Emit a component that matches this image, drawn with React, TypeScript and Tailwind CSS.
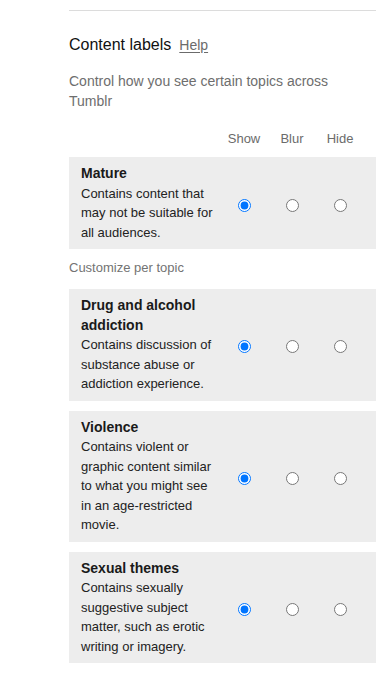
import * as React from "react";

type Topic = {
  id: string;
  title: string;
  description: string;
};

const MATURE: Topic = {
  id: "mature",
  title: "Mature",
  description: "Contains content that may not be suitable for all audiences.",
};

const TOPICS: Topic[] = [
  {
    id: "drugs",
    title: "Drug and alcohol addiction",
    description: "Contains discussion of substance abuse or addiction experience.",
  },
  {
    id: "violence",
    title: "Violence",
    description:
      "Contains violent or graphic content similar to what you might see in an age-restricted movie.",
  },
  {
    id: "sexual",
    title: "Sexual themes",
    description:
      "Contains sexually suggestive subject matter, such as erotic writing or imagery.",
  },
];

const CHOICES = ["show", "blur", "hide"] as const;

function TopicRow({ topic }: { topic: Topic }) {
  return (
    <div className="flex items-center bg-[#ededed] px-3 py-[7px]">
      <div className="min-w-0 flex-1 pr-1">
        <div className="text-[14px] font-bold leading-[19.5px] text-[#1a1a1a]">
          {topic.title}
        </div>
        <div className="text-[13px] leading-[19.5px] text-[#222]">
          {topic.description}
        </div>
      </div>
      {CHOICES.map((choice) => (
        <label key={choice} className="flex w-12 shrink-0 items-center justify-center">
          <input
            type="radio"
            name={topic.id}
            value={choice}
            defaultChecked={choice === "show"}
            aria-label={`${choice} ${topic.title}`}
            className="m-0 mt-[4px] h-[13px] w-[13px]"
          />
        </label>
      ))}
    </div>
  );
}

export default function App() {
  return (
    <div className="min-h-screen bg-white font-['Liberation_Sans',Arial,sans-serif]">
      <div className="ml-[69px] mr-3 pt-[10px]">
        <div className="h-px bg-[#dcdcdc]" />

        <div className="mt-[22px] flex items-baseline gap-[8px] text-[16px] leading-6">
          <h2 className="font-normal text-[#111]">Content labels</h2>
          <a href="#" className="text-[14px] text-[#6b6b6b] underline underline-offset-2">
            Help
          </a>
        </div>

        <p className="mt-[14px] pr-10 text-[14px] leading-5 text-[#6e6e6e]">
          Control how you see certain topics across Tumblr
        </p>

        <div className="mt-[19px] flex justify-end pr-3 text-[13px] leading-[18px] text-[#6b6b6b]">
          <span className="w-12 text-center">Show</span>
          <span className="w-12 text-center">Blur</span>
          <span className="w-12 text-center">Hide</span>
        </div>

        <div className="mt-[9px]">
          <TopicRow topic={MATURE} />
        </div>

        <div className="mt-[10px] text-[13px] leading-[18px] text-[#737373]">
          Customize per topic
        </div>

        <div className="mt-[12px] flex flex-col gap-[10px] pb-5">
          {TOPICS.map((topic) => (
            <TopicRow key={topic.id} topic={topic} />
          ))}
        </div>
      </div>
    </div>
  );
}
